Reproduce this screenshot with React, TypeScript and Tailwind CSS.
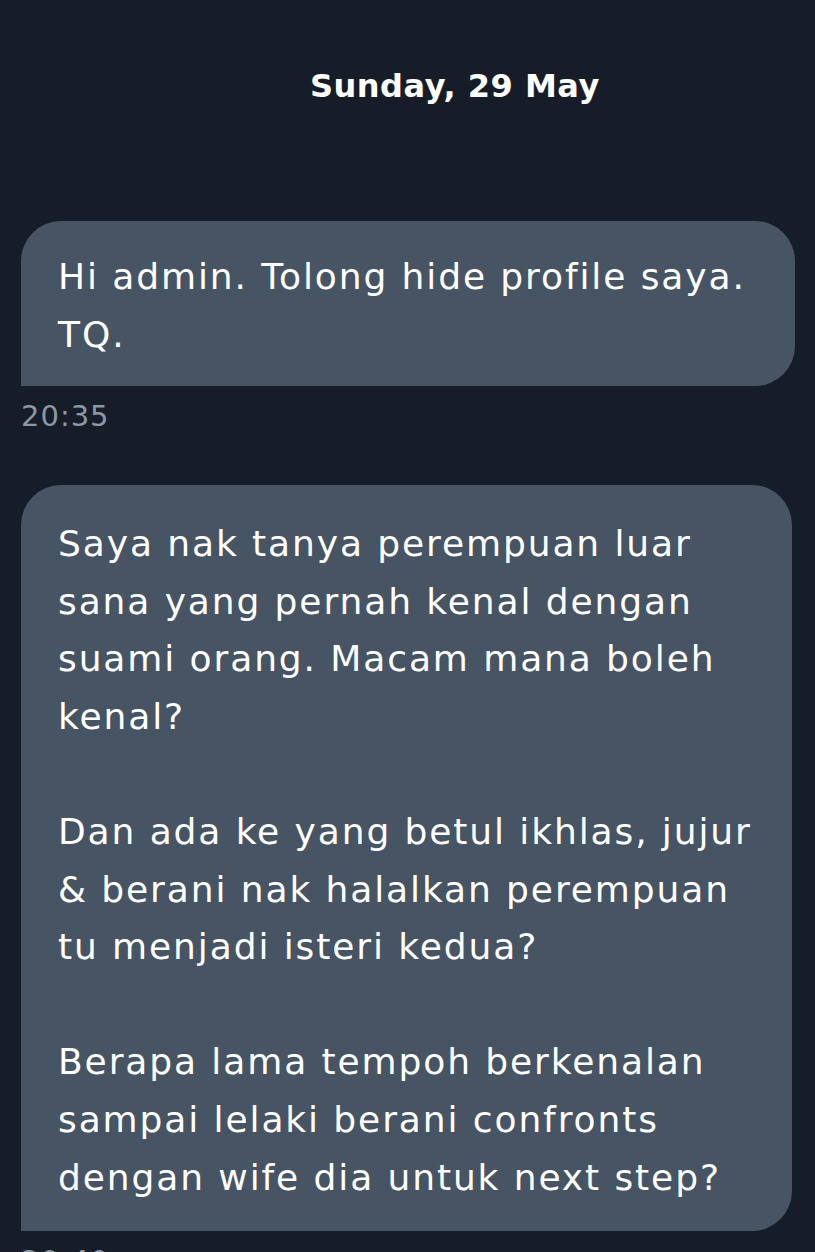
export default function App() {
  const font = { fontFamily: '"DejaVu Sans", Inter, sans-serif' };
  return (
    <div className="w-[815px] h-[1252px] overflow-hidden bg-[#171d28]" style={font}>
      <div className="pt-[60px] pl-[310px] text-[32px] font-bold text-white leading-[52px] tracking-[0.5px]">Sunday, 29 May</div>

      <div className="mt-[109px] pl-[21px] pr-[20px]">
        <div className="bg-[#475464] rounded-[40px] rounded-bl-none pl-[37px] pr-[30px] pt-[27px] pb-[22px] text-[36px] leading-[58px] text-white tracking-[1.9px]">
          Hi admin. Tolong hide profile saya.
          <br />
          TQ.
        </div>
        <div className="mt-[8px] text-[29px] leading-[44px] text-[#8b98a5] tracking-[1px]">20:35</div>
      </div>

      <div className="mt-[47px] pl-[21px] pr-[23px]">
        <div className="bg-[#475464] rounded-[40px] rounded-bl-none pl-[37px] pr-[30px] pt-[30px] pb-[25px] text-[36px] leading-[57.6px] text-white tracking-[1.9px]">
          <div>
            Saya nak tanya perempuan luar
            <br />
            sana yang pernah kenal dengan
            <br />
            suami orang. Macam mana boleh
            <br />
            kenal?
          </div>
          <div className="mt-[57.6px]">
            Dan ada ke yang betul ikhlas, jujur
            <br />
            &amp; berani nak halalkan perempuan
            <br />
            tu menjadi isteri kedua?
          </div>
          <div className="mt-[57.6px]">
            Berapa lama tempoh berkenalan
            <br />
            sampai lelaki berani confronts
            <br />
            dengan wife dia untuk next step?
          </div>
        </div>
        <div className="mt-[8px] text-[29px] leading-[44px] text-[#8b98a5] tracking-[1px]">20:40</div>
      </div>
    </div>
  );
}
